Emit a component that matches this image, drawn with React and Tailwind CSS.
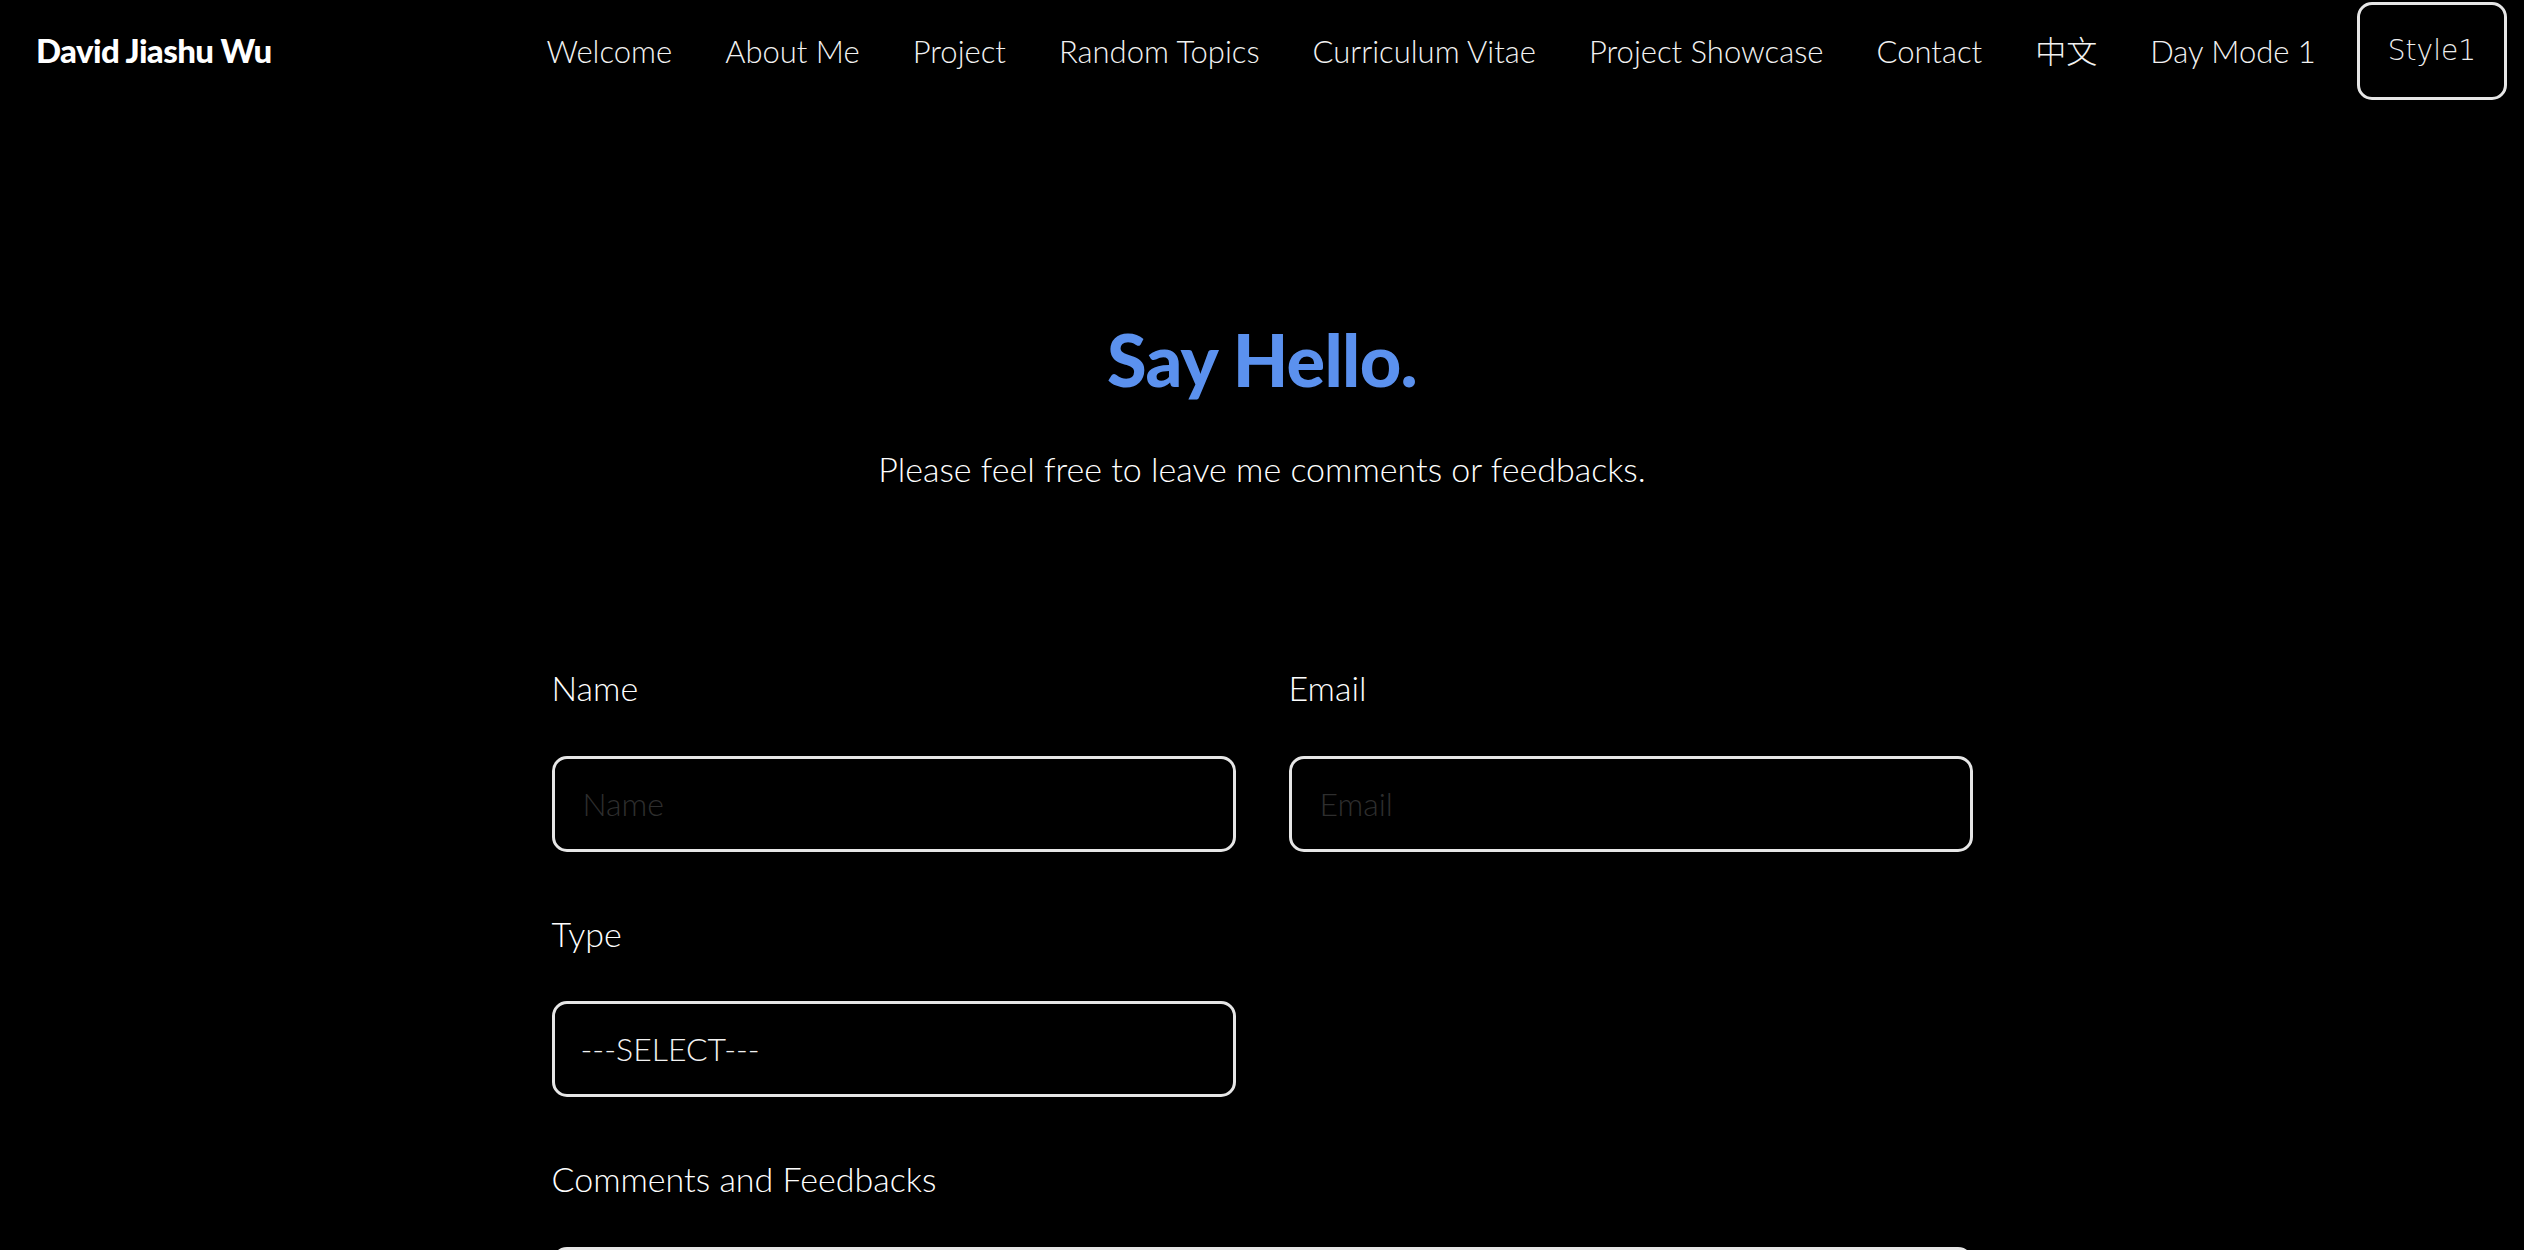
import React from 'react';

const navLinks = [
    "Welcome",
    "About Me",
    "Project",
    "Random Topics",
    "Curriculum Vitae",
    "Project Showcase",
    "Contact",
    "中文",
    "Day Mode 1",
];

const Contact = () => {
    return (
        <div className="min-h-screen bg-black text-white font-['Lato','Noto_Sans_CJK_SC',sans-serif]">
            {/* Top navigation */}
            <header className="flex items-center justify-between py-[2px] pl-[36px] pr-[17px]">
                <a href="#" className="text-[33px] font-black tracking-[-0.6px]">
                    David Jiashu Wu
                </a>
                <nav className="flex items-center">
                    <ul className="flex items-center gap-[53px] text-[31px] font-light">
                        {navLinks.map((link) => (
                            <li key={link}>
                                <a href="#" className="text-[#f2f2f2]">{link}</a>
                            </li>
                        ))}
                    </ul>
                    <button className="ml-[41px] h-[98px] px-[28px] border-[3px] border-[#e6e6e6] rounded-[15px] text-[28px] font-light text-[#eeeeee] font-['DejaVu_Sans',sans-serif]">
                        Style1
                    </button>
                </nav>
            </header>

            <main>
                {/* Title */}
                <section className="text-center pt-[221px]">
                    <h1 className="text-[72px] leading-none font-black tracking-[-0.7px] text-[#5b91ee]">
                        Say Hello.
                    </h1>
                    <p className="mt-[54px] text-[34px] leading-[1.2] font-light">
                        Please feel free to leave me comments or feedbacks.
                    </p>
                </section>

                {/* Form */}
                <form className="mx-auto mt-[178px] w-[1421px] grid grid-cols-2 gap-x-[53px] gap-y-[62px] pb-[120px]">
                    <div className="flex flex-col">
                        <label className="text-[34px] leading-[1.2] font-light">Name</label>
                        <input
                            type="text"
                            placeholder="Name"
                            className="mt-[47px] h-[96px] px-[28px] bg-black border-[3px] border-[#e6e6e6] rounded-[15px] text-[32px] font-light text-white placeholder:text-[#2e2e2e] outline-none"
                        />
                    </div>
                    <div className="flex flex-col">
                        <label className="text-[34px] leading-[1.2] font-light">Email</label>
                        <input
                            type="email"
                            placeholder="Email"
                            className="mt-[47px] h-[96px] px-[28px] bg-black border-[3px] border-[#e6e6e6] rounded-[15px] text-[32px] font-light text-white placeholder:text-[#2e2e2e] outline-none"
                        />
                    </div>
                    <div className="flex flex-col">
                        <label className="text-[34px] leading-[1.2] font-light">Type</label>
                        <select className="mt-[47px] h-[96px] px-[26px] appearance-none bg-black border-[3px] border-[#e6e6e6] rounded-[15px] text-[32px] font-light text-[#f2f2f2] outline-none">
                            <option>---SELECT---</option>
                            <option>Comment</option>
                            <option>Feedback</option>
                        </select>
                    </div>
                    <div />
                    <div className="col-span-2 flex flex-col">
                        <label className="text-[34px] leading-[1.2] font-light">Comments and Feedbacks</label>
                        <textarea
                            rows="6"
                            className="mt-[47px] h-[300px] p-[28px] bg-black border-[3px] border-[#e6e6e6] rounded-[15px] text-[32px] font-light text-white outline-none resize-none"
                        />
                    </div>
                </form>
            </main>
        </div>
    );
};

export default Contact;
